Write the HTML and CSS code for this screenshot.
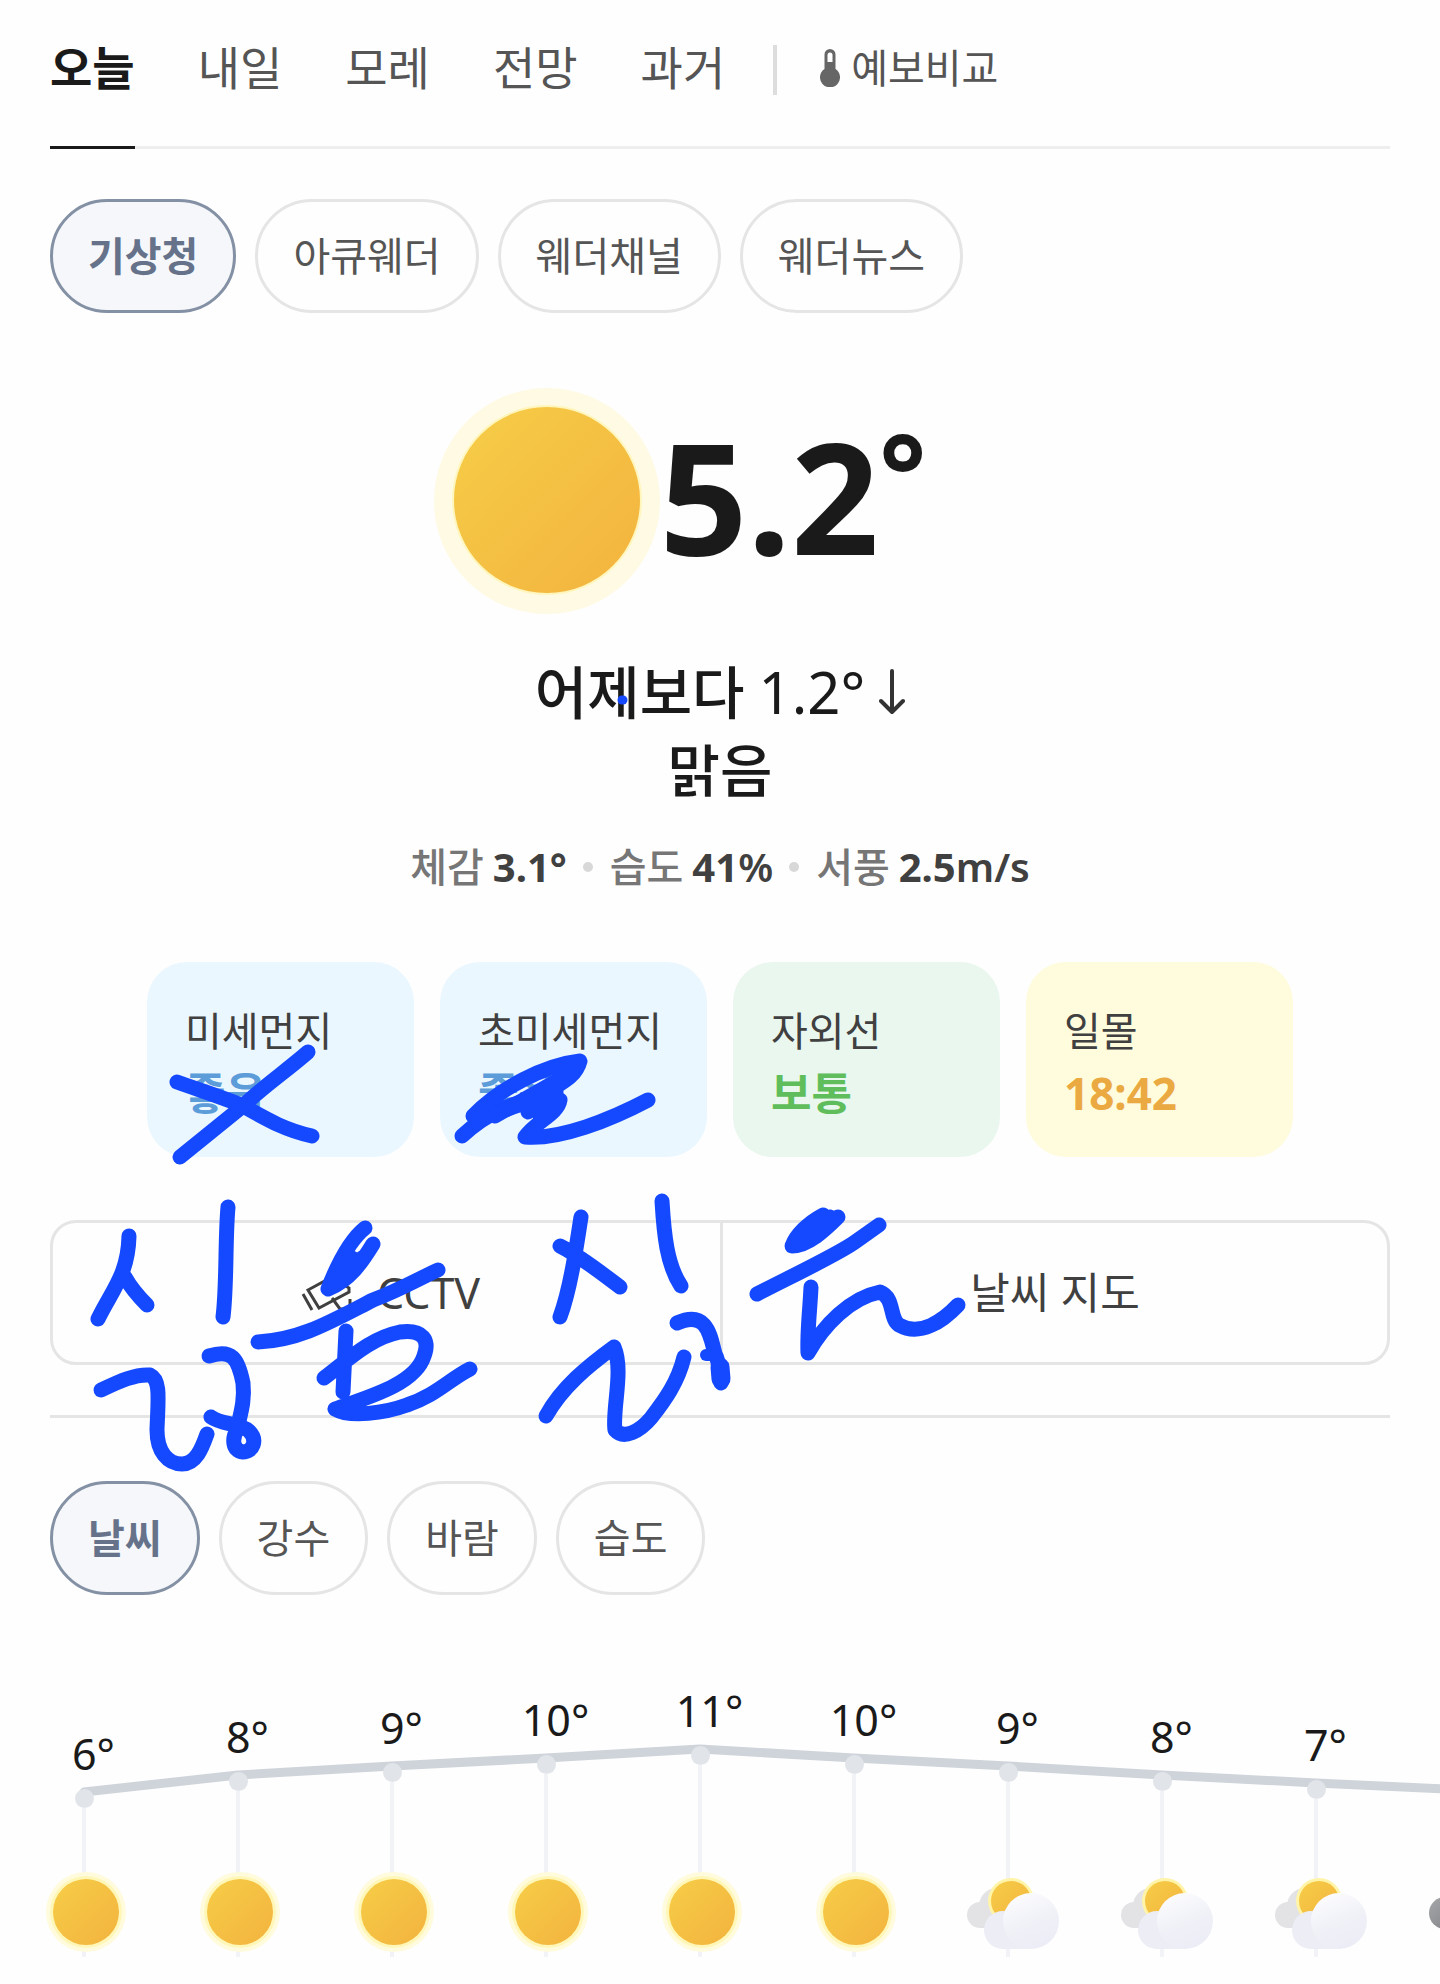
FILE: index.html
```
<!DOCTYPE html>
<html lang="ko">
<head>
    <meta charset="UTF-8">
    <meta name="viewport" content="width=device-width, initial-scale=1">
    <title>오늘 날씨</title>
    <link rel="stylesheet" href="styles.css">
</head>
<body>
    <!-- shared icons -->
    <svg class="defs" width="0" height="0" aria-hidden="true">
        <defs>
            <linearGradient id="sunFill" x1="0" y1="0" x2="1" y2="1">
                <stop offset="0" stop-color="#f6cd47"/>
                <stop offset="1" stop-color="#f3b33f"/>
            </linearGradient>
            <linearGradient id="cloudFill" x1="0.2" y1="0" x2="0.6" y2="1">
                <stop offset="0" stop-color="#fdfdff"/>
                <stop offset="0.5" stop-color="#f1f2f8"/>
                <stop offset="1" stop-color="#ebecf5"/>
            </linearGradient>
            <linearGradient id="darkFill" x1="0" y1="0" x2="1" y2="1">
                <stop offset="0" stop-color="#a6a7a9"/>
                <stop offset="1" stop-color="#7f8083"/>
            </linearGradient>
            <symbol id="sun" viewBox="0 0 84 84">
                <circle cx="42" cy="42" r="40" fill="#fffbdc"/>
                <circle cx="42" cy="42" r="36" fill="#fff7b8"/>
                <circle cx="42" cy="42" r="33" fill="url(#sunFill)"/>
            </symbol>
            <symbol id="cloudy" viewBox="0 0 96 84">
                <g fill="#e3e3e6">
                    <circle cx="17" cy="42" r="13"/>
                    <circle cx="34" cy="33" r="18"/>
                    <path d="M17 40h24v15H17z"/>
                </g>
                <circle cx="48" cy="28" r="23" fill="#fff4a8"/>
                <circle cx="48" cy="28" r="20" fill="url(#sunFill)"/>
                <circle cx="40" cy="57" r="19" fill="#ecedf5"/>
                <path d="M40 56h28v20H40z" fill="#ecedf5"/>
                <circle cx="68" cy="48" r="28" fill="url(#cloudFill)"/>
            </symbol>
            <symbol id="overcast" viewBox="0 0 96 84">
                <circle cx="20" cy="40" r="16" fill="url(#darkFill)"/>
                <circle cx="54" cy="36" r="25" fill="#8d8e91"/>
            </symbol>
        </defs>
    </svg>

    <div class="container">
        <nav class="tabs">
            <a class="tab active" href="#today">오늘</a>
            <a class="tab" href="#tomorrow">내일</a>
            <a class="tab" href="#after">모레</a>
            <a class="tab" href="#outlook">전망</a>
            <a class="tab" href="#past">과거</a>
            <a class="compare" href="#compare">
                <svg width="20" height="38" viewBox="0 0 20 38" aria-hidden="true">
                    <path d="M4.500 5.500a5.500 5.500 0 0 1 11 0V20a10 10 0 1 1-11 0z" fill="#666"/>
                    <path d="M7.500 13V6a2.500 2.500 0 0 1 5 0v7z" fill="#fff"/>
                </svg>
                예보비교
            </a>
        </nav>

        <div class="chips source">
            <button class="chip active" type="button">기상청</button>
            <button class="chip" type="button">아큐웨더</button>
            <button class="chip" type="button">웨더채널</button>
            <button class="chip" type="button">웨더뉴스</button>
        </div>

        <section class="now">
            <div class="now-temp">
                <svg class="now-icon" viewBox="0 0 226 226" aria-hidden="true">
                    <circle cx="113" cy="113" r="113" fill="#fffae3"/>
                    <circle cx="113" cy="112" r="95" fill="#fff6bd"/>
                    <circle cx="113" cy="112" r="93" fill="url(#sunFill)"/>
                </svg>
                <strong>5.2</strong><span class="degree">°</span>
            </div>
            <p class="headline">
                어제보다 <span>1.2°</span>
                <svg width="26" height="46" viewBox="0 0 26 46" aria-hidden="true">
                    <path d="M13 2v41M2 32l11 11 11-11" fill="none" stroke="#333" stroke-width="4" stroke-linecap="round" stroke-linejoin="round"/>
                </svg>
            </p>
            <p class="headline">맑음</p>
            <ul class="summary">
                <li>체감 <b>3.1°</b></li>
                <li>습도 <b>41<i>%</i></b></li>
                <li>서풍 <b>2.5<i>m/s</i></b></li>
            </ul>
        </section>

        <ul class="cards">
            <li class="card blue">미세먼지<strong>좋음</strong></li>
            <li class="card blue">초미세먼지<strong>좋음</strong></li>
            <li class="card green">자외선<strong>보통</strong></li>
            <li class="card yellow">일몰<strong>18:42</strong></li>
        </ul>

        <div class="links">
            <a href="#cctv">
                <svg width="52" height="38" viewBox="0 0 52 38" aria-hidden="true">
                    <path d="M7 16 31 3l17 11v4L18 34zM2 20l9 16M31 24l8 11h10V25" fill="none" stroke="#404040" stroke-width="3"/>
                </svg>
                CCTV
            </a>
            <a href="#map">날씨 지도</a>
        </div>

        <div class="chips kind">
            <button class="chip active" type="button">날씨</button>
            <button class="chip" type="button">강수</button>
            <button class="chip" type="button">바람</button>
            <button class="chip" type="button">습도</button>
        </div>
    </div>

    <div class="chart">
        <svg class="chart-line" width="1540" height="120" aria-hidden="true">
            <polyline points="84,82 238,65 392,56 546,48 700,39 854,48 1008,56 1162,65 1316,73 1470,80" fill="none" stroke="#cfd4da" stroke-width="9" stroke-linecap="round" stroke-linejoin="round"/>
        </svg>
        <ul class="hours">
            <li style="--drop: 43px"><span>6°</span><svg class="icon"><use href="#sun"/></svg></li>
            <li style="--drop: 26px"><span>8°</span><svg class="icon"><use href="#sun"/></svg></li>
            <li style="--drop: 17px"><span>9°</span><svg class="icon"><use href="#sun"/></svg></li>
            <li style="--drop: 9px"><span>10°</span><svg class="icon"><use href="#sun"/></svg></li>
            <li style="--drop: 0px"><span>11°</span><svg class="icon"><use href="#sun"/></svg></li>
            <li style="--drop: 9px"><span>10°</span><svg class="icon"><use href="#sun"/></svg></li>
            <li style="--drop: 17px"><span>9°</span><svg class="icon wide"><use href="#cloudy"/></svg></li>
            <li style="--drop: 26px"><span>8°</span><svg class="icon wide"><use href="#cloudy"/></svg></li>
            <li style="--drop: 34px"><span>7°</span><svg class="icon wide"><use href="#cloudy"/></svg></li>
            <li style="--drop: 43px"><svg class="icon wide"><use href="#overcast"/></svg></li>
        </ul>
    </div>

    <!-- pen marks over the page -->
    <svg class="pen" width="1440" height="1500" viewBox="0 0 1440 1500" aria-hidden="true">
        <path d="M622 700h1" stroke-width="9"/>
        <path d="M177 1082C205 1092 225 1098 243 1106C268 1120 285 1130 312 1136"/>
        <path d="M308 1052C285 1072 265 1085 243 1106L180 1157"/>
        <path d="M473 1116C500 1088 545 1065 580 1061C575 1080 555 1085 542 1096C515 1103 490 1110 462 1136"/>
        <path d="M500 1112C530 1100 550 1095 560 1100C558 1114 535 1122 525 1137C560 1140 610 1120 648 1100"/>
        <path d="M495 1116 562 1078M528 1112 556 1092M540 1116 558 1102"/>
        <path d="M129 1236C128 1275 112 1290 98 1319M125 1277C131 1288 138 1296 147 1305"/>
        <path d="M228 1207C225 1240 227 1285 223 1317"/>
        <path d="M101 1390C120 1381 135 1374 150 1375C161 1380 158 1400 157 1430C157 1452 168 1464 182 1464C196 1464 202 1448 207 1434"/>
        <path d="M209 1356C232 1349 238 1358 243 1383C245 1402 240 1415 237 1430"/>
        <path d="M211 1417C222 1425 240 1423 249 1431C258 1440 253 1452 243 1452C232 1451 232 1438 237 1430"/>
        <path d="M365 1228C350 1240 338 1263 328 1289C350 1280 362 1262 373 1244M331 1286 352 1258M334 1286 362 1258"/>
        <path d="M258 1342C300 1340 330 1322 373 1300C400 1290 420 1278 438 1270"/>
        <path d="M346 1331 343 1392M324 1378C348 1360 370 1338 400 1332C423 1329 430 1340 424 1356C415 1385 365 1398 335 1409C350 1418 385 1413 407 1405C435 1396 450 1379 470 1369"/>
        <path d="M581 1217C576 1250 570 1290 560 1317M560 1246C580 1256 600 1272 620 1287"/>
        <path d="M662 1201C664 1235 667 1265 681 1286"/>
        <path d="M546 1416C562 1387 588 1366 614 1347C624 1370 612 1410 615 1430C624 1440 640 1431 651 1418C665 1400 678 1382 684 1357"/>
        <path d="M677 1323C707 1310 710 1335 715 1354C720 1362 719 1374 721 1383"/>
        <path d="M720 1367 721 1379" stroke-width="19"/>
        <path d="M706 1355h4" stroke-width="12"/>
        <path d="M823 1215C808 1223 796 1235 792 1246C808 1246 825 1230 838 1217M803 1238 830 1217"/>
        <path d="M757 1294C800 1272 840 1253 855 1242L879 1225"/>
        <path d="M811 1287C810 1310 807 1332 808 1353C824 1325 850 1298 880 1292C895 1298 889 1318 899 1325C920 1337 943 1321 958 1305"/>
    </svg>
</body>
</html>
```
FILE: styles.css
```
* {
    box-sizing: border-box;
}
body {
    position: relative;
    margin: 0;
    background-color: #fefefe;
    color: #1a1a1a;
    font-family: "Noto Sans", "Noto Sans CJK KR", sans-serif;
    overflow-x: hidden;
}
ul, p {
    margin: 0;
    padding: 0;
    list-style: none;
}
a {
    color: inherit;
    text-decoration: none;
}
.defs {
    position: absolute;
}
.container {
    padding: 0 50px;
}

/* tabs */
.tabs {
    display: flex;
    gap: 63px;
    box-shadow: inset 0 -3px #eee;
    color: #555;
    font-size: 46px;
    line-height: 66px;
}
.tab {
    padding: 34px 0 46px;
    border-bottom: 3px solid transparent;
}
.tab.active {
    border-color: #1a1a1a;
    color: #1a1a1a;
    font-weight: bold;
}
.compare {
    display: flex;
    align-items: center;
    align-self: flex-start;
    gap: 11px;
    height: 50px;
    margin: 45px 0 0 -15px;
    padding: 0 0 5px 43px;
    border-left: 4px solid #ddd;
    font-size: 40px;
}

/* chips */
.chips {
    display: flex;
    gap: 19px;
}
.source {
    margin-top: 50px;
}
.kind {
    padding-top: 63px;
    margin-top: 50px;
    border-top: 3px solid #e5e5e5;
}
.chip {
    padding: 24px 35px;
    border: 3px solid #e5e5e5;
    border-radius: 57px;
    background-color: transparent;
    color: #555;
    font-family: inherit;
    font-size: 40px;
    line-height: 60px;
    cursor: pointer;
}
.chip.active {
    border-color: #8491a5;
    background-color: #f5f7fa;
    color: #66728a;
    font-weight: bold;
}

/* current weather */
.now {
    margin-top: 75px;
    text-align: center;
}
.now-temp {
    display: flex;
    justify-content: center;
    height: 227px;
    padding-right: 80px;
    font-weight: bold;
    line-height: 214px;
}
.now-temp strong {
    font-size: 154px;
    font-weight: 700;
}
.now-icon {
    width: 226px;
    height: 226px;
}
.degree {
    font-size: 112px;
    line-height: 168px;
}
.headline {
    display: flex;
    align-items: center;
    justify-content: center;
    gap: 14px;
    font-size: 57px;
    font-weight: 500;
    line-height: 78px;
}
.headline span {
    font-size: 58px;
    font-weight: 400;
}
.now-temp + .headline {
    margin-top: 38px;
}
.summary {
    display: flex;
    justify-content: center;
    margin-top: 28px;
    color: #767676;
    font-size: 40px;
    font-weight: 500;
    line-height: 60px;
}
.summary li {
    display: flex;
    align-items: center;
    gap: 9px;
}
.summary li + li::before {
    content: "";
    width: 10px;
    height: 10px;
    margin: 0 8px 0 16px;
    border-radius: 50%;
    background-color: #d8d8d8;
}
.summary b {
    color: #404040;
}
.summary i {
    font-style: normal;
    font-weight: 600;
}

/* air, uv and sunset */
.cards {
    display: grid;
    grid-template-columns: repeat(4, 1fr);
    gap: 26px;
    margin: 65px 97px 0;
}
.card {
    padding: 37px 0 32px 38px;
    border-radius: 40px;
    color: #404040;
    font-size: 40px;
    line-height: 63px;
}
.card strong {
    display: block;
    font-size: 44px;
}
.blue {
    background-color: #ebf7ff;
}
.blue strong {
    color: #5c9cd9;
}
.green {
    background-color: #eaf7ef;
}
.green strong {
    color: #5fbe5b;
}
.yellow {
    background-color: #fffbdd;
}
.yellow strong {
    color: #eba941;
}

/* cctv and map */
.links {
    display: grid;
    grid-template-columns: 1fr 1fr;
    margin-top: 63px;
    border: 3px solid #e5e5e5;
    border-radius: 26px;
    color: #404040;
    font-size: 43px;
    line-height: 139px;
}
.links a {
    display: flex;
    align-items: center;
    justify-content: center;
    gap: 24px;
}
.links a:first-child {
    padding-left: 8px;
}
.links a + a {
    border-left: 3px solid #e5e5e5;
}

/* hourly chart */
.chart {
    position: relative;
    margin-top: 55px;
    padding: 60px 0 27px;
    overflow: hidden;
}
.chart-line {
    position: absolute;
    top: 60px;
    left: 0;
}
.hours {
    display: flex;
    height: 247px;
    padding-left: 7px;
}
.hours li {
    position: relative;
    display: flex;
    flex: 0 0 154px;
    flex-direction: column;
    align-items: center;
    font-size: 43px;
}
.hours span {
    position: absolute;
    top: calc(var(--drop) - 29px);
    padding-left: 19px;
    line-height: 60px;
}
/* dot on the line */
.hours li::before {
    content: "";
    width: 19px;
    height: 19px;
    margin-top: calc(var(--drop) + 36px);
    border-radius: 50%;
    background-color: #e1e5ea;
}
/* stem under the dot */
.hours li::after {
    content: "";
    flex: 1;
    width: 4px;
    background-color: #f1f3f6;
}
.icon {
    position: absolute;
    bottom: 3px;
    width: 84px;
    height: 84px;
    margin-left: 4px;
}
.icon.wide {
    bottom: 0;
    width: 96px;
    margin-left: 6px;
}

.pen {
    position: absolute;
    top: 0;
    left: 0;
    fill: none;
    stroke: #1549ff;
    stroke-width: 15px;
    stroke-linecap: round;
    stroke-linejoin: round;
    pointer-events: none;
}
```
